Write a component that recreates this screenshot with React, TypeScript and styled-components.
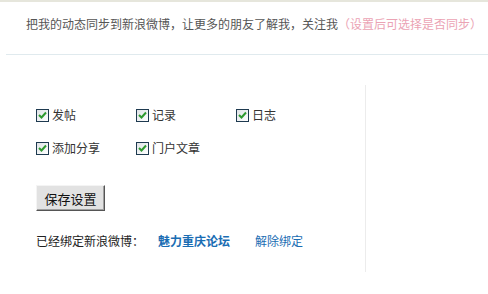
import { FC } from 'react';
import styled, { createGlobalStyle } from 'styled-components';

const GlobalStyle = createGlobalStyle`
  html, body {
    margin: 0;
    padding: 0;
    background: #fff;
    font-family: "Noto Sans CJK SC", "Noto Sans", sans-serif;
  }
`;

const Page = styled.div`
  width: 488px;
  height: 294px;
  border-top: 2px solid #e6e6dc;
  box-sizing: border-box;
  overflow: hidden;
`;

const Header = styled.div`
  margin-left: 6px;
  height: 53px;
  box-sizing: border-box;
  padding: 14px 0 0 20px;
  border-bottom: 1px solid #e0eaee;
  font-size: 12px;
  line-height: 16px;
  color: #555;
  white-space: nowrap;
`;

const Hint = styled.span`
  color: #eba3b4;
`;

const Body = styled.div`
  display: flex;
`;

const Panel = styled.div`
  width: 366px;
  height: 187px;
  box-sizing: border-box;
  margin-top: 30px;
  padding: 22px 0 0 36px;
  border-right: 1px solid #ececec;
  font-size: 12px;
  color: #333;
`;

const OptionGrid = styled.div`
  display: grid;
  grid-template-columns: repeat(3, 100px);
  row-gap: 17px;
`;

const Option = styled.label`
  display: flex;
  align-items: center;
  height: 16px;
  line-height: 16px;
`;

const Box = styled.span`
  width: 11px;
  height: 11px;
  border: 1px solid #1e3a50;
  background: linear-gradient(135deg, #dfe3e6, #fff);
  margin-right: 3px;
  display: inline-flex;
  align-items: center;
  justify-content: center;
`;

const SaveButton = styled.button`
  margin-top: 29px;
  width: 69px;
  height: 26px;
  padding: 0;
  font-family: inherit;
  font-size: 13px;
  color: #111;
  background: #e2e2e2;
  border: 1px solid;
  border-color: #f4f4f4 #555 #555 #f4f4f4;
  box-shadow: inset -1px -1px 0 #a0a0a0;
`;

const BindRow = styled.div`
  margin-top: 22px;
  display: flex;
  align-items: center;
  height: 16px;
  line-height: 16px;
`;

const BindLabel = styled.span`
  width: 122px;
  color: #222;
`;

const BoardLink = styled.a<{ $bold?: boolean }>`
  color: #1a6db3;
  text-decoration: none;
  font-weight: ${p => (p.$bold ? 700 : 400)};
  margin-right: ${p => (p.$bold ? '25px' : '0')};
`;

const options = ['发帖', '记录', '日志', '添加分享', '门户文章'];

const Check: FC = () => (
  <Box>
    <svg width="9" height="8" viewBox="0 0 9 8">
      <path d="M1 4 L3.5 6.5 L8 1.5" stroke="#2f9a2f" strokeWidth="2" fill="none" />
    </svg>
  </Box>
);

const App: FC = () => (
  <>
    <GlobalStyle />
    <Page>
      <Header>
        把我的动态同步到新浪微博，让更多的朋友了解我，关注我
        <Hint>（设置后可选择是否同步）</Hint>
      </Header>
      <Body>
        <Panel>
          <OptionGrid>
            {options.map(name => (
              <Option key={name}>
                <Check />
                {name}
              </Option>
            ))}
          </OptionGrid>
          <SaveButton>保存设置</SaveButton>
          <BindRow>
            <BindLabel>已经绑定新浪微博：</BindLabel>
            <BoardLink $bold href="#">魅力重庆论坛</BoardLink>
            <BoardLink href="#">解除绑定</BoardLink>
          </BindRow>
        </Panel>
      </Body>
    </Page>
  </>
);

export default App;
